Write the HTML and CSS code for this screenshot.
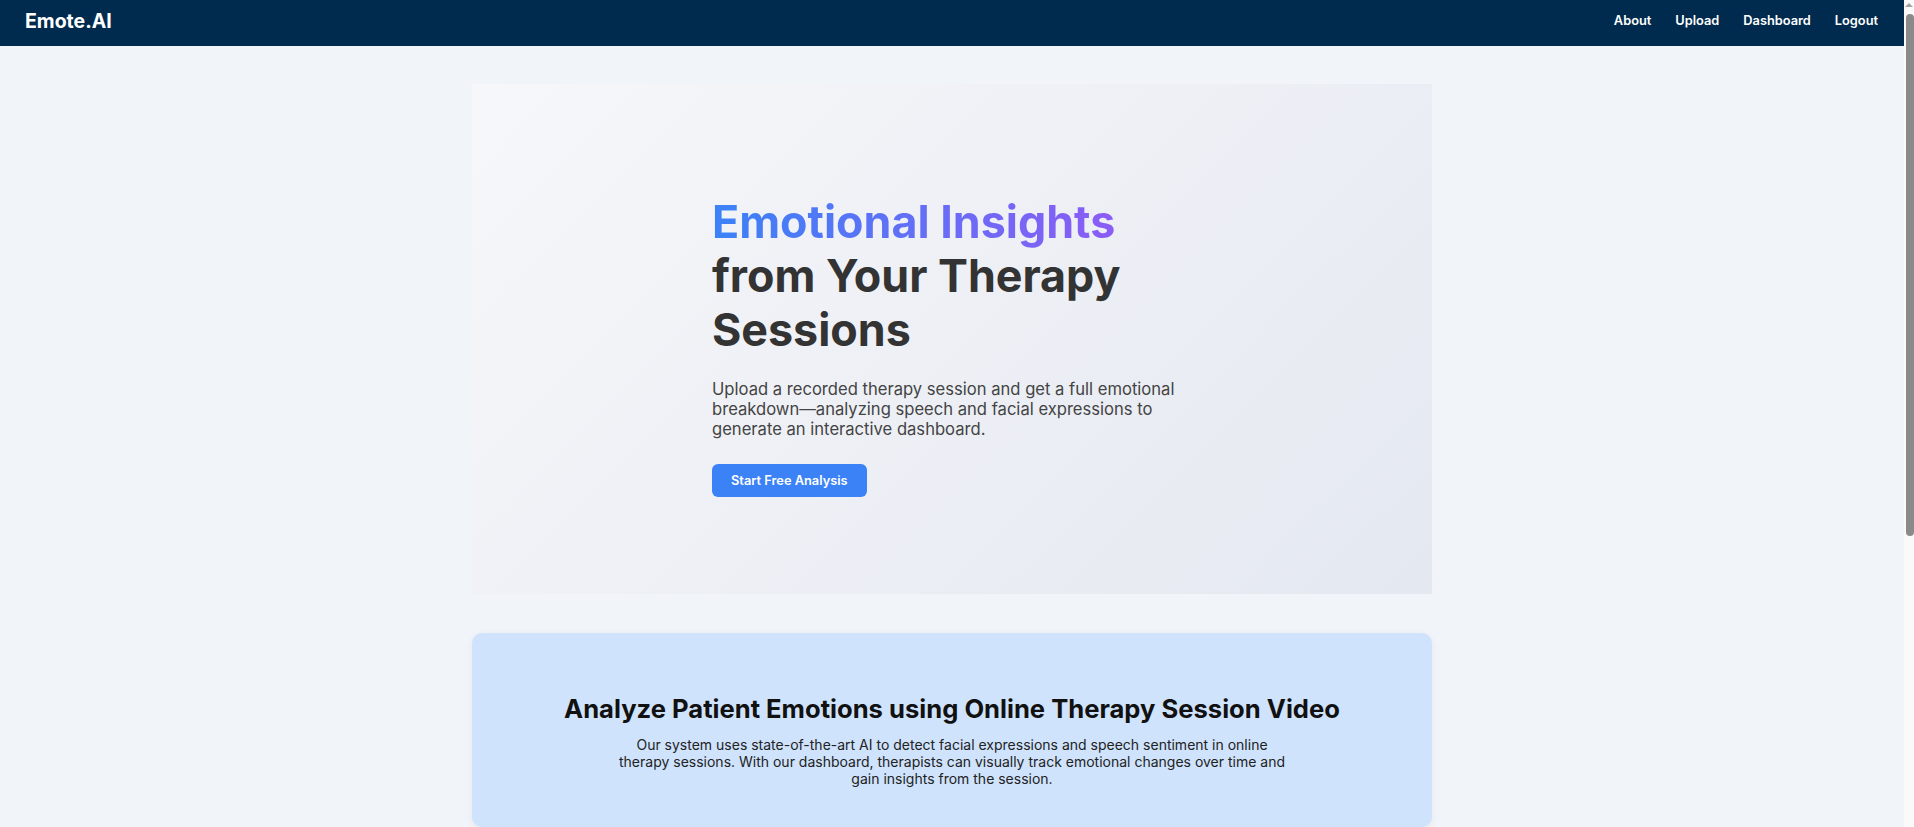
FILE: index.html
```html
<!DOCTYPE html>
<html lang="en">
<head>
<meta charset="utf-8">
<title>Emote.AI</title>
<link rel="stylesheet" href="styles.css">
</head>
<body>
<nav class="navbar">
  <a class="brand" href="#">Emote.AI</a>
  <div class="nav-links">
    <a href="#">About</a>
    <a href="#">Upload</a>
    <a href="#">Dashboard</a>
    <a href="#">Logout</a>
  </div>
</nav>
<main class="container">
  <section class="hero">
    <div class="hero-content">
      <h1 class="hero-title"><span class="grad">Emotional Insights</span><br>from Your Therapy Sessions</h1>
      <p class="hero-text">Upload a recorded therapy session and get a full emotional breakdown—analyzing speech and facial expressions to generate an interactive dashboard.</p>
      <a class="btn" href="#">Start Free Analysis</a>
    </div>
  </section>
  <section class="info-card">
    <h2>Analyze Patient Emotions using Online Therapy Session Video</h2>
    <p>Our system uses state-of-the-art AI to detect facial expressions and speech sentiment in online therapy sessions. With our dashboard, therapists can visually track emotional changes over time and gain insights from the session.</p>
  </section>
  <section class="spacer"></section>
</main>
<div class="scrollbar" aria-hidden="true">
  <div class="scroll-arrow"></div>
  <div class="scroll-thumb"></div>
</div>
</body>
</html>
```

FILE: styles.css
```css
* { box-sizing: border-box; }

body {
  margin: 0 10px 0 0;
  background: #f1f4f9;
  font-family: Inter, "Noto Sans", sans-serif;
  color: #333;
}

.navbar {
  height: 46px;
  background: #002b4e;
  display: flex;
  align-items: center;
  justify-content: space-between;
  padding: 0 26px 5px 25px;
}

.brand {
  color: #fff;
  font-weight: 700;
  font-size: 19.5px;
  text-decoration: none;
}

.nav-links {
  display: flex;
  gap: 24px;
}

.nav-links a {
  color: #fff;
  font-weight: 600;
  font-size: 12.8px;
  text-decoration: none;
}

.container {
  max-width: 960px;
  margin: 38px auto 0;
}

.hero {
  background: linear-gradient(135deg, #f6f7fa 0%, #e4e8f0 100%);
  padding: 112px 240px 95px;
  height: 510px;
}

.hero-content {
  max-width: 480px;
}

.hero-title {
  font-size: 44.8px;
  line-height: 1.2;
  font-weight: 700;
  margin: 0 0 22px;
  color: #333;
}

.grad {
  background: linear-gradient(90deg, #3b82f6, #8b5cf6);
  -webkit-background-clip: text;
  background-clip: text;
  color: transparent;
}

.hero-text {
  font-size: 16.6px;
  line-height: 20px;
  color: #444;
  margin: 0 0 25px;
}

.btn {
  display: inline-block;
  background: #3b82f6;
  color: #fff;
  font-weight: 600;
  font-size: 12.8px;
  text-decoration: none;
  padding: 9px 19px;
  border-radius: 6px;
}

.info-card {
  margin-top: 39px;
  background: #cfe3fd;
  border-radius: 10px;
  box-shadow: 0 2px 8px rgba(0,0,0,0.05);
  padding: 60px 40px 40px;
  text-align: center;
}

.info-card h2 {
  margin: 0 0 12px;
  font-size: 25.6px;
  font-weight: 700;
  color: #111;
}

.info-card p {
  max-width: 680px;
  margin: 0 auto;
  font-size: 14px;
  color: #222;
}

.spacer {
  height: 1200px;
}

.scrollbar {
  position: fixed;
  top: 0;
  right: 0;
  width: 10px;
  height: 100%;
  background: #fafafa;
}

.scroll-arrow {
  position: absolute;
  top: 3px;
  right: 1px;
  width: 0;
  height: 0;
  border-left: 4px solid transparent;
  border-right: 4px solid transparent;
  border-bottom: 4px solid #a3a3a3;
}

.scroll-thumb {
  position: absolute;
  top: 14px;
  right: 0;
  width: 8px;
  height: 522px;
  background: #8a8a8a;
  border-radius: 4px;
}
```
